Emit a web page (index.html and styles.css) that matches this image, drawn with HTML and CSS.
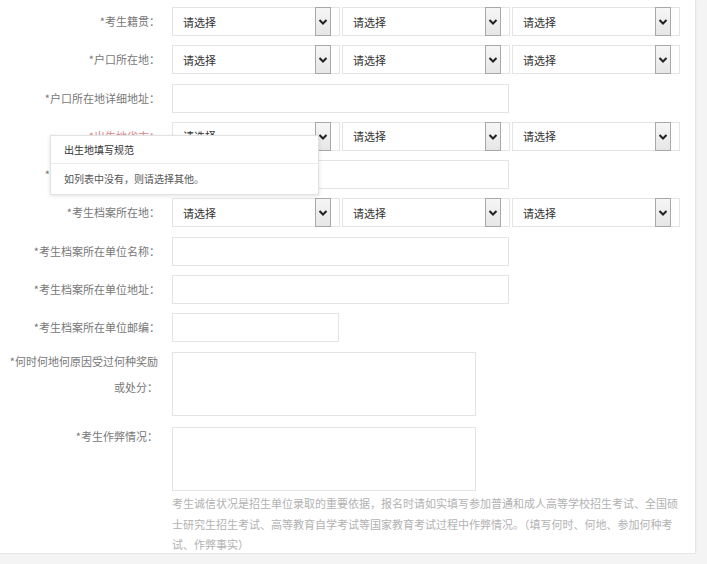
FILE: index.html
```html
<!DOCTYPE html>
<html lang="zh-CN">
<head>
    <meta charset="UTF-8">
    <meta name="viewport" content="width=device-width, initial-scale=1.0">
    <title>考生信息</title>
    <link rel="stylesheet" href="styles.css">
</head>
<body>
    <div class="page">
        <form class="reg-form">
            <div class="row">
                <label class="row-label">*考生籍贯：</label>
                <div class="row-field">
                    <div class="pick"><span>请选择</span><i class="pick-arrow"><svg width="14" height="27" viewBox="0 0 14 27"><polyline points="3.5,12 7,15.5 10.5,12" fill="none" stroke="#222" stroke-width="2"/></svg></i></div>
                    <div class="pick"><span>请选择</span><i class="pick-arrow"><svg width="14" height="27" viewBox="0 0 14 27"><polyline points="3.5,12 7,15.5 10.5,12" fill="none" stroke="#222" stroke-width="2"/></svg></i></div>
                    <div class="pick"><span>请选择</span><i class="pick-arrow"><svg width="14" height="27" viewBox="0 0 14 27"><polyline points="3.5,12 7,15.5 10.5,12" fill="none" stroke="#222" stroke-width="2"/></svg></i></div>
                </div>
            </div>
            <div class="row">
                <label class="row-label">*户口所在地：</label>
                <div class="row-field">
                    <div class="pick"><span>请选择</span><i class="pick-arrow"><svg width="14" height="27" viewBox="0 0 14 27"><polyline points="3.5,12 7,15.5 10.5,12" fill="none" stroke="#222" stroke-width="2"/></svg></i></div>
                    <div class="pick"><span>请选择</span><i class="pick-arrow"><svg width="14" height="27" viewBox="0 0 14 27"><polyline points="3.5,12 7,15.5 10.5,12" fill="none" stroke="#222" stroke-width="2"/></svg></i></div>
                    <div class="pick"><span>请选择</span><i class="pick-arrow"><svg width="14" height="27" viewBox="0 0 14 27"><polyline points="3.5,12 7,15.5 10.5,12" fill="none" stroke="#222" stroke-width="2"/></svg></i></div>
                </div>
            </div>
            <div class="row">
                <label class="row-label">*户口所在地详细地址：</label>
                <div class="row-field"><div class="text-box"></div></div>
            </div>
            <div class="row">
                <label class="row-label row-label-active">*出生地省市：</label>
                <div class="row-field">
                    <div class="pick"><span>请选择</span><i class="pick-arrow"><svg width="14" height="27" viewBox="0 0 14 27"><polyline points="3.5,12 7,15.5 10.5,12" fill="none" stroke="#222" stroke-width="2"/></svg></i></div>
                    <div class="pick"><span>请选择</span><i class="pick-arrow"><svg width="14" height="27" viewBox="0 0 14 27"><polyline points="3.5,12 7,15.5 10.5,12" fill="none" stroke="#222" stroke-width="2"/></svg></i></div>
                    <div class="pick"><span>请选择</span><i class="pick-arrow"><svg width="14" height="27" viewBox="0 0 14 27"><polyline points="3.5,12 7,15.5 10.5,12" fill="none" stroke="#222" stroke-width="2"/></svg></i></div>
                </div>
            </div>
            <div class="row">
                <label class="row-label">*现在学习或工作单位：</label>
                <div class="row-field"><div class="text-box"></div></div>
            </div>
            <div class="row">
                <label class="row-label">*考生档案所在地：</label>
                <div class="row-field">
                    <div class="pick"><span>请选择</span><i class="pick-arrow"><svg width="14" height="27" viewBox="0 0 14 27"><polyline points="3.5,12 7,15.5 10.5,12" fill="none" stroke="#222" stroke-width="2"/></svg></i></div>
                    <div class="pick"><span>请选择</span><i class="pick-arrow"><svg width="14" height="27" viewBox="0 0 14 27"><polyline points="3.5,12 7,15.5 10.5,12" fill="none" stroke="#222" stroke-width="2"/></svg></i></div>
                    <div class="pick"><span>请选择</span><i class="pick-arrow"><svg width="14" height="27" viewBox="0 0 14 27"><polyline points="3.5,12 7,15.5 10.5,12" fill="none" stroke="#222" stroke-width="2"/></svg></i></div>
                </div>
            </div>
            <div class="row">
                <label class="row-label">*考生档案所在单位名称：</label>
                <div class="row-field"><div class="text-box"></div></div>
            </div>
            <div class="row">
                <label class="row-label">*考生档案所在单位地址：</label>
                <div class="row-field"><div class="text-box"></div></div>
            </div>
            <div class="row">
                <label class="row-label">*考生档案所在单位邮编：</label>
                <div class="row-field"><div class="text-box text-box-short"></div></div>
            </div>
            <div class="row row-area">
                <label class="row-label">*何时何地何原因受过何种奖励或处分：</label>
                <div class="row-field"><div class="area-box"></div></div>
            </div>
            <div class="row row-area">
                <label class="row-label">*考生作弊情况：</label>
                <div class="row-field"><div class="area-box"></div></div>
            </div>
            <p class="help">考生诚信状况是招生单位录取的重要依据，报名时请如实填写参加普通和成人高等学校招生考试、全国硕士研究生招生考试、高等教育自学考试等国家教育考试过程中作弊情况。（填写何时、何地、参加何种考试、作弊事实）</p>
        </form>

        <!-- 出生地提示框 -->
        <div class="tip">
            <div class="tip-title">出生地填写规范</div>
            <div class="tip-body">如列表中没有，则请选择其他。</div>
        </div>
    </div>
</body>
</html>
```

FILE: styles.css
```css
/* Page */
body {
    margin: 0;
    background: #f4f4f4;
    font-family: "Noto Sans CJK SC", "Noto Sans", sans-serif;
}

.page {
    position: relative;
    width: 695px;
    height: 553px;
    background: #fff;
    border-right: 1px solid #e6e6e6;
    border-bottom: 1px solid #e6e6e6;
    box-shadow: 0 1px 3px rgba(0, 0, 0, 0.05);
    overflow: hidden;
}

/* Form rows */
.reg-form {
    display: flex;
    flex-direction: column;
    gap: 9.3px;
    padding-top: 7px;
}

.row {
    display: flex;
    align-items: flex-start;
}

.row-label {
    width: 160px;
    margin-right: 12px;
    flex-shrink: 0;
    text-align: right;
    font-size: 11px;
    line-height: 29px;
    color: #777;
}

.row-label-active {
    color: #d98a8a;
}

.row-area .row-label {
    width: 158px;
    margin-right: 14px;
    line-height: 26px;
    margin-top: -4px;
}

.row-area + .row-area {
    margin-top: 2px;
}

.row-field {
    display: flex;
    gap: 2px;
}

/* Select box */
.pick {
    width: 168px;
    height: 29px;
    box-sizing: border-box;
    border: 1px solid #e4e4e4;
    display: flex;
    align-items: center;
    justify-content: space-between;
    padding: 0 8px 0 10px;
    font-size: 11px;
    color: #333;
    background: #fff;
}

.pick-arrow {
    display: block;
    width: 16px;
    height: 29px;
    box-sizing: border-box;
    border: 1px solid #a8a8a8;
    background: linear-gradient(#f6f6f6, #e6e6e6);
}

.pick-arrow svg {
    display: block;
}

/* Text inputs */
.text-box {
    width: 337px;
    height: 29px;
    box-sizing: border-box;
    border: 1px solid #e4e4e4;
}

.text-box-short {
    width: 167px;
}

.area-box {
    width: 304px;
    height: 64px;
    box-sizing: border-box;
    border: 1px solid #e4e4e4;
}

/* Help text */
.help {
    margin: -7px 0 0 172px;
    width: 512px;
    font-size: 11px;
    line-height: 20.5px;
    color: #b2b2b2;
}

/* Tooltip */
.tip {
    position: absolute;
    top: 135px;
    left: 50px;
    width: 267px;
    background: #fff;
    border: 1px solid #e2e2e2;
    box-shadow: 0 1px 4px rgba(0, 0, 0, 0.12);
    font-size: 10px;
    color: #444;
}

.tip-title {
    padding: 0 13px;
    line-height: 27px;
    border-bottom: 1px solid #ececec;
    color: #333;
}

.tip-body {
    padding: 0 13px;
    line-height: 30px;
    color: #555;
}
```
